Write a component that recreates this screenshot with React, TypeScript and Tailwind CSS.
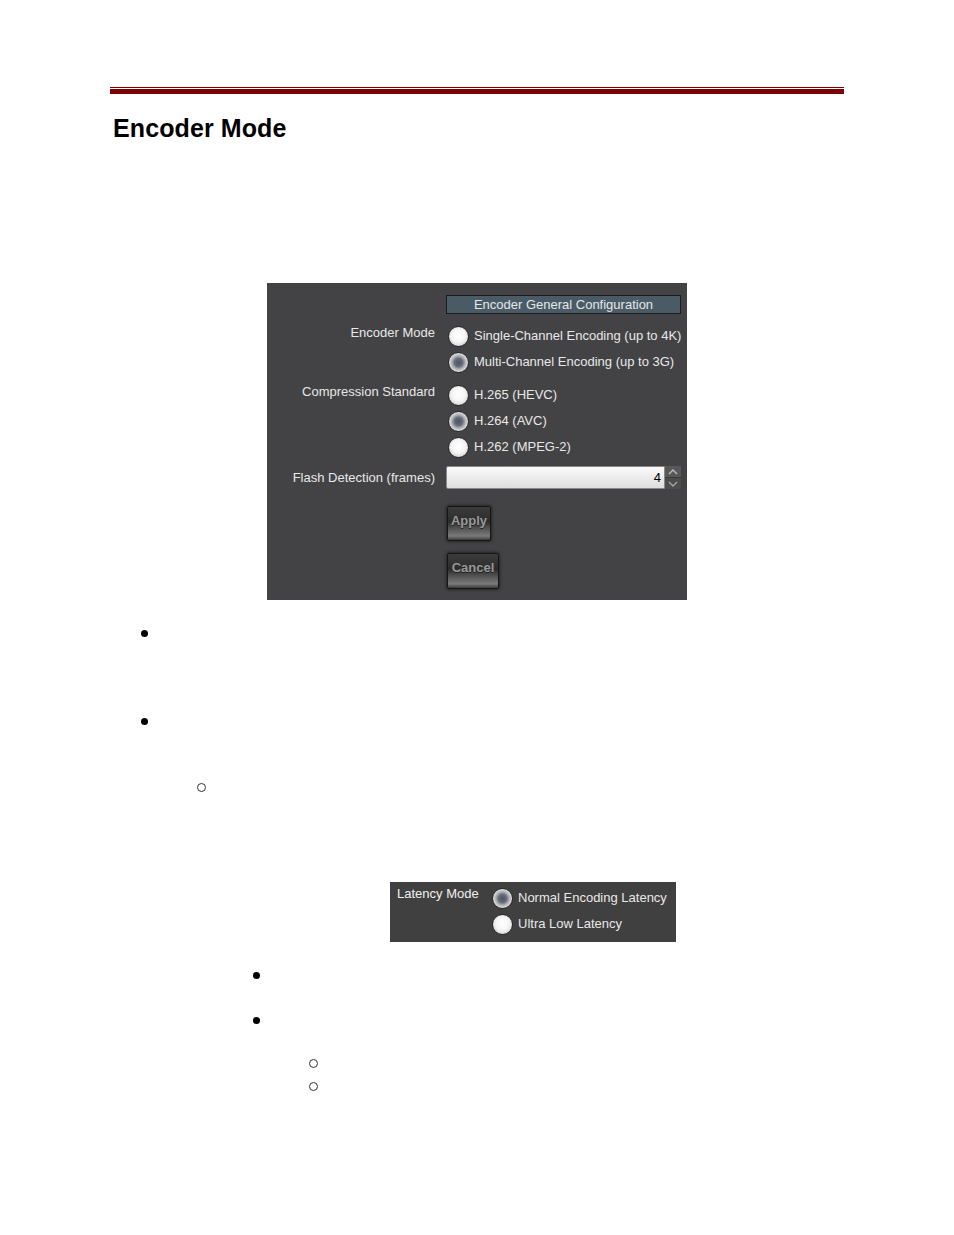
import type { ReactNode } from "react";

const font = { fontFamily: '"Liberation Sans", Arial, sans-serif' };

function Radio({ checked }: { checked?: boolean }) {
  return (
    <span
      className={
        checked
          ? "block w-[21px] h-[21px] shrink-0 rounded-full border border-[#2a2a2a] bg-[radial-gradient(circle,#4e5462_0%,#666b78_30%,#a9abb0_48%,#dcdcdc_68%,#a8a8a8_100%)]"
          : "block w-[21px] h-[21px] shrink-0 rounded-full border border-[#2a2a2a] bg-[radial-gradient(circle_at_50%_45%,#ffffff_0%,#f6f6f6_45%,#d4d4d4_80%,#a9a9a9_100%)]"
      }
    />
  );
}

function Option({ checked, children }: { checked?: boolean; children: ReactNode }) {
  return (
    <div className="h-[26px] flex items-center gap-[5px] pl-[2px]">
      <Radio checked={checked} />
      <span className="text-[13px] leading-[16px] text-[#e8e8e8] whitespace-nowrap">{children}</span>
    </div>
  );
}

function Group({ label, children }: { label: string; children: ReactNode }) {
  return (
    <div className="flex">
      <div className="w-[168px] pt-[2px] text-right text-[13px] leading-[16px] text-[#e8e8e8] whitespace-nowrap">
        {label}
      </div>
      <div className="ml-[11px] flex flex-col">{children}</div>
    </div>
  );
}

function Dot() {
  return <span className="block w-[7px] h-[7px] rounded-full bg-black" />;
}

function Ring() {
  return <span className="block w-[9px] h-[9px] rounded-full border border-[#333]" />;
}

function GlossButton({ label, w, h }: { label: string; w: string; h: string }) {
  return (
    <div
      className={`${w} ${h} ml-[1px] rounded-[2px] border border-[#151515] shadow-[0_0_3px_1px_rgba(0,0,0,0.45)] bg-[linear-gradient(to_bottom,#3c3c3c_0%,#2c2c2c_45%,#4a4a4a_60%,#7a7a7a_88%,#3a3a3a_100%)] flex justify-center pt-[6px]`}
    >
      <span className="text-[13px] leading-[16px] font-bold text-[#999999] [text-shadow:0_1px_0_#222]">{label}</span>
    </div>
  );
}

export default function App() {
  return (
    <div className="min-h-[1235px] w-full bg-white" style={font}>
      <div className="mx-auto w-[734px] pt-[87px] pb-[60px]">
        <div className="h-px bg-[#800000]" />
        <div className="mt-px h-[5px] bg-[#800000]" />

        <h1 className="mt-[21px] pl-[3px] text-[25px] leading-[27px] font-bold text-black tracking-[0.1px]">
          Encoder Mode
        </h1>

        <div className="mt-[141px] mx-auto w-[420px] h-[317px] bg-[#434345] pt-[12px]">
          <div className="flex">
            <div className="w-[179px]" />
            <div className="w-[235px] h-[19px] border border-[#1a1d20] bg-[#4b5b65] text-center text-[13px] leading-[18px] text-[#e2e8ec]">
              Encoder General Configuration
            </div>
          </div>

          <div className="mt-[9px]">
            <Group label="Encoder Mode">
              <Option>Single-Channel Encoding (up to 4K)</Option>
              <Option checked>Multi-Channel Encoding (up to 3G)</Option>
            </Group>
          </div>

          <div className="mt-[7px]">
            <Group label="Compression Standard">
              <Option>H.265 (HEVC)</Option>
              <Option checked>H.264 (AVC)</Option>
              <Option>H.262 (MPEG-2)</Option>
            </Group>
          </div>

          <div className="mt-[6px] flex items-center h-[23px]">
            <div className="w-[168px] text-right text-[13px] leading-[16px] text-[#e8e8e8] whitespace-nowrap">
              Flash Detection (frames)
            </div>
            <div className="ml-[11px] flex h-[23px]">
              <div className="w-[219px] h-[23px] rounded-l-[2px] border border-[#8a8a8a] bg-[linear-gradient(to_bottom,#fbfbfb_0%,#ececec_50%,#dedede_100%)] flex items-center justify-end pr-[3px] text-[13px] text-black">
                4
              </div>
              <div className="w-[16px] h-[23px] flex flex-col bg-[#4c4c4c]">
                <div className="flex-1 flex items-center justify-center border-b border-[#3a3a3a] bg-[#585858]">
                  <svg width="10" height="6" viewBox="0 0 10 6">
                    <path d="M1 5 L5 1 L9 5" fill="none" stroke="#bdbdbd" strokeWidth="1.3" />
                  </svg>
                </div>
                <div className="flex-1 flex items-center justify-center">
                  <svg width="10" height="6" viewBox="0 0 10 6">
                    <path d="M1 1 L5 5 L9 1" fill="none" stroke="#a6a6a6" strokeWidth="1.3" />
                  </svg>
                </div>
              </div>
            </div>
          </div>

          <div className="mt-[17px] ml-[179px] flex flex-col gap-[12px]">
            <GlossButton label="Apply" w="w-[44px]" h="h-[35px]" />
            <GlossButton label="Cancel" w="w-[52px]" h="h-[36px]" />
          </div>
        </div>

        <div className="mt-[30px] ml-[31px]">
          <Dot />
        </div>
        <div className="mt-[81px] ml-[31px]">
          <Dot />
        </div>
        <div className="mt-[58px] ml-[87px]">
          <Ring />
        </div>

        <div className="mt-[90px] ml-[280px] w-[286px] h-[60px] bg-[#404040] flex pl-[7px] pt-[3px]">
          <div className="w-[95px] pt-[1px] text-[13px] leading-[16px] text-[#f0f0f0] whitespace-nowrap">Latency Mode</div>
          <div className="flex flex-col -ml-[2px]">
            <Option checked>Normal Encoding Latency</Option>
            <Option>Ultra Low Latency</Option>
          </div>
        </div>

        <div className="mt-[30px] ml-[143px]">
          <Dot />
        </div>
        <div className="mt-[38px] ml-[143px]">
          <Dot />
        </div>
        <div className="mt-[35px] ml-[199px]">
          <Ring />
        </div>
        <div className="mt-[14px] ml-[199px]">
          <Ring />
        </div>
      </div>
    </div>
  );
}
